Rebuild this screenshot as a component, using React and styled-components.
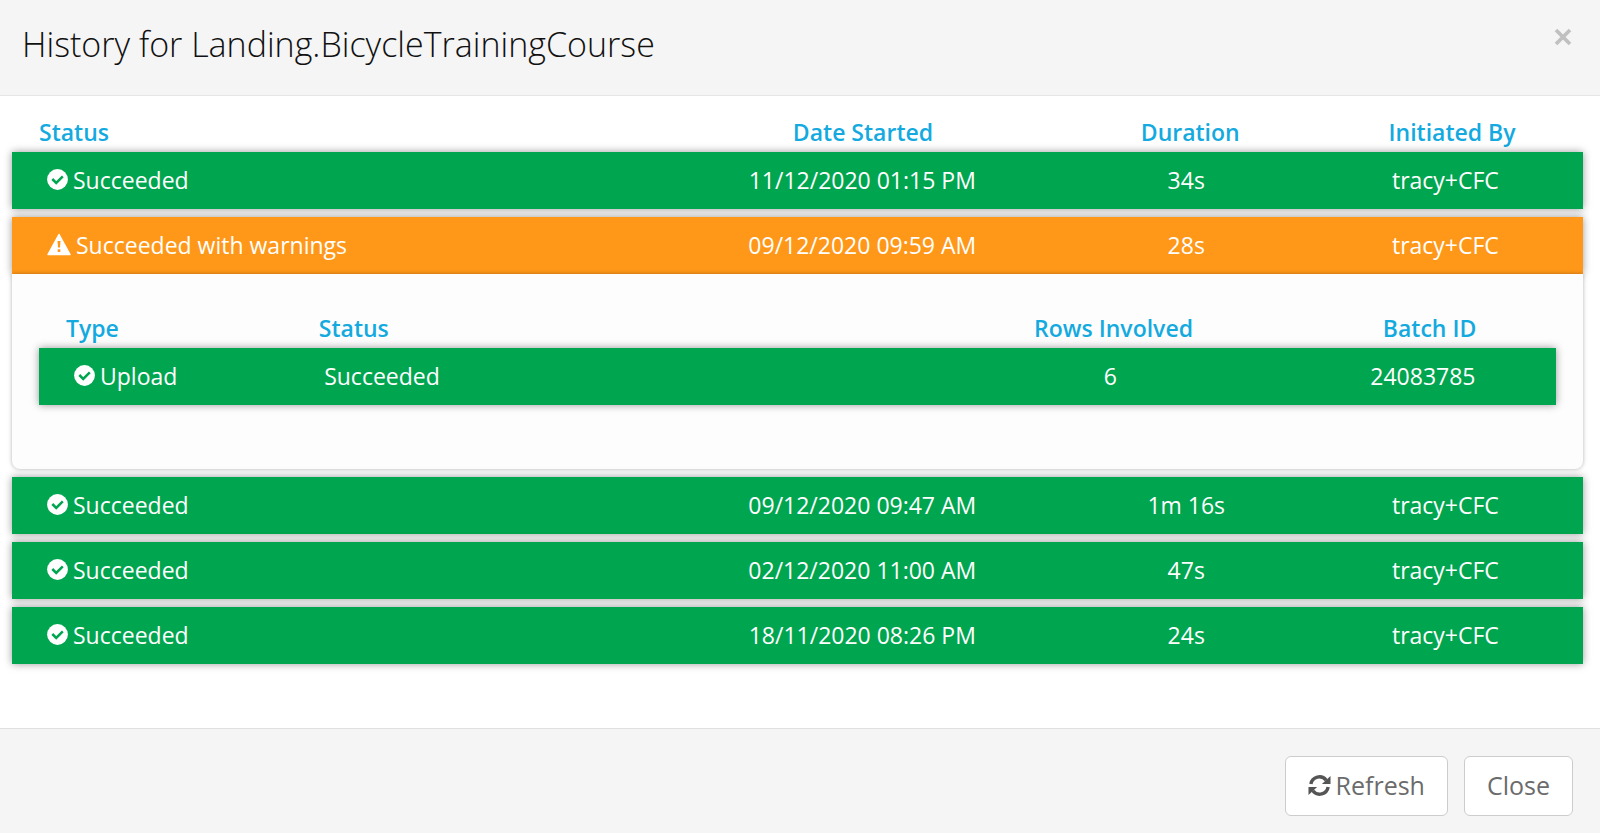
import React from 'react';
import styled, { createGlobalStyle } from 'styled-components'

const GlobalStyle = createGlobalStyle`
  * {
    box-sizing: border-box;
  }

  body {
    margin: 0;
    background: #f5f5f5;
    color: #333;
    font-family: "Open Sans", sans-serif;
    font-size: 23px;
    line-height: 32px;
  }
`;

const Modal = styled.div`
  background: #fff;
`;

const ModalHeader = styled.header`
  display: flex;
  align-items: flex-start;
  justify-content: space-between;
  padding: 20px 28px 27px 22px;
  background: #f5f5f5;
  border-bottom: 1px solid #e5e5e5;
`;

const Title = styled.h1`
  margin: 0;
  color: #111;
  font-size: 34px;
  font-weight: 300;
  line-height: 48px;
`;

const Dismiss = styled.button`
  display: flex;
  margin: 0;
  padding: 8px 0 0;
  border: 0;
  background: none;
  color: #c0c0c0;
  cursor: pointer;
`;

const ModalBody = styled.main`
  padding: 16px 17px 64px 12px;
`;

// rows are laid out as grids, so that each one can carry its own shadow and padding
const Table = styled.table`
  display: block;
`;

const TableHead = styled.thead`
  display: block;
`;

const TableBody = styled.tbody`
  display: flex;
  flex-direction: column;
  gap: 8px;
`;

const Row = styled.tr`
  display: grid;
  grid-template-columns: ${props => props.$columns};
  align-items: center;
`;

const HeadRow = styled(Row)`
  height: 40px;
`;

const statusColors = {
  success: '#00a64f',
  warning: '#ff9818'
};

const StatusRow = styled(Row)`
  height: 57px;
  padding: 0 8px 2px;
  background: ${props => statusColors[props.$status]};
  color: #fff;
  box-shadow: 0 0 8px rgba(0, 0, 0, 0.4);
`;

const HeadCell = styled.th`
  padding: 0 0 0 ${props => props.$left ? '27px' : '0'};
  color: #14aadf;
  font-weight: 600;
  text-align: ${props => props.$left ? 'left' : 'center'};
`;

const Cell = styled.td`
  display: flex;
  align-items: center;
  justify-content: ${props => props.$left ? 'flex-start' : 'center'};
  gap: 5px;
  padding: 0 0 0 ${props => props.$left ? '27px' : '0'};
`;

const DetailRow = styled.tr`
  display: block;
  margin-top: -8px;
`;

const DetailCell = styled.td`
  display: block;
  padding: 34px 27px 64px;
  background: #fdfdfd;
  border-radius: 0 0 8px 8px;
  box-shadow: 0 0 4px rgba(0, 0, 0, 0.3);
`;

const ModalFooter = styled.footer`
  display: flex;
  justify-content: flex-end;
  gap: 16px;
  padding: 27px 27px 17px;
  background: #f5f5f5;
  border-top: 1px solid #e0e0e0;
`;

const Button = styled.button`
  display: flex;
  align-items: center;
  gap: 5px;
  height: 60px;
  padding: 0 22px 2px;
  border: 1px solid #ccc;
  border-radius: 6px;
  background: #fff;
  color: #6b6b6b;
  font-family: inherit;
  font-size: 25px;
  cursor: pointer;
`;

const RefreshIcon = () => (
  <svg width="23" height="23" viewBox="0 0 24 24" fill="#555" aria-hidden="true">
    <path d="M3 10.500A9 9 0 0 1 19 6.500M21 13.500A9 9 0 0 1 5 17.500" fill="none" stroke="#555" strokeWidth="3.600" />
    <path d="M23.500 2V10.500H14.500ZM0.500 22V13.500H9.500Z" />
  </svg>
);

const CrossIcon = () => (
  <svg width="18" height="18" viewBox="0 0 18 18" stroke="currentColor" strokeWidth="3.800" aria-hidden="true">
    <path d="M2 2l14 14M16 2L2 16" />
  </svg>
);

const CheckIcon = () => (
  <svg width="21" height="21" viewBox="0 0 21 21" aria-hidden="true">
    <circle cx="10.500" cy="10.500" r="10.400" fill="#fff" />
    <path d="M5.300 10l3.900 3.900l6.600 -6.600" fill="none" stroke="#00a64f" strokeWidth="2.500" />
  </svg>
);

const WarningIcon = () => (
  <svg width="24" height="23" viewBox="0 0 24 23" aria-hidden="true">
    <path d="M12 1.500L23 21.500H1Z" fill="#fff" stroke="#fff" strokeWidth="1.500" strokeLinejoin="round" />
    <path d="M10.500 8h3l-0.500 6.500h-2zM10.700 16.300h2.600v2.700h-2.600z" fill="#ff9818" />
  </svg>
);

const StatusIcon = ({ status }) => (
  status === 'warning' ? <WarningIcon /> : <CheckIcon />
);

const historyColumns = '5fr 3fr 2fr 2fr';
const batchColumns = '2fr 5fr 3fr 2fr';

const history = [
  { status: 'success', label: 'Succeeded', date: '11/12/2020 01:15 PM', duration: '34s', user: 'tracy+CFC' },
  {
    status: 'warning',
    label: 'Succeeded with warnings',
    date: '09/12/2020 09:59 AM',
    duration: '28s',
    user: 'tracy+CFC',
    batches: [
      { status: 'success', type: 'Upload', label: 'Succeeded', rows: 6, id: 24083785 }
    ]
  },
  { status: 'success', label: 'Succeeded', date: '09/12/2020 09:47 AM', duration: '1m 16s', user: 'tracy+CFC' },
  { status: 'success', label: 'Succeeded', date: '02/12/2020 11:00 AM', duration: '47s', user: 'tracy+CFC' },
  { status: 'success', label: 'Succeeded', date: '18/11/2020 08:26 PM', duration: '24s', user: 'tracy+CFC' }
];

const BatchTable = (props) => (
  <Table>
    <TableHead>
      <HeadRow $columns={batchColumns}>
        <HeadCell $left>Type</HeadCell>
        <HeadCell $left>Status</HeadCell>
        <HeadCell>Rows Involved</HeadCell>
        <HeadCell>Batch ID</HeadCell>
      </HeadRow>
    </TableHead>
    <TableBody>
      {props.batches.map(batch => (
        <StatusRow key={batch.id} $columns={batchColumns} $status={batch.status}>
          <Cell $left><StatusIcon status={batch.status} />{batch.type}</Cell>
          <Cell $left>{batch.label}</Cell>
          <Cell>{batch.rows}</Cell>
          <Cell>{batch.id}</Cell>
        </StatusRow>
      ))}
    </TableBody>
  </Table>
);

const HistoryTable = (props) => (
  <Table>
    <TableHead>
      <HeadRow $columns={historyColumns}>
        <HeadCell $left>Status</HeadCell>
        <HeadCell>Date Started</HeadCell>
        <HeadCell>Duration</HeadCell>
        <HeadCell>Initiated By</HeadCell>
      </HeadRow>
    </TableHead>
    <TableBody>
      {props.entries.map(entry => (
        <React.Fragment key={entry.date}>
          <StatusRow $columns={historyColumns} $status={entry.status}>
            <Cell $left><StatusIcon status={entry.status} />{entry.label}</Cell>
            <Cell>{entry.date}</Cell>
            <Cell>{entry.duration}</Cell>
            <Cell>{entry.user}</Cell>
          </StatusRow>
          {entry.batches &&
            <DetailRow>
              <DetailCell colSpan={4}>
                <BatchTable batches={entry.batches} />
              </DetailCell>
            </DetailRow>
          }
        </React.Fragment>
      ))}
    </TableBody>
  </Table>
);

const App = () => (
  <>
    <GlobalStyle />
    <Modal role="dialog" aria-labelledby="history-title">
      <ModalHeader>
        <Title id="history-title">History for Landing.BicycleTrainingCourse</Title>
        <Dismiss type="button" aria-label="Dismiss"><CrossIcon /></Dismiss>
      </ModalHeader>
      <ModalBody>
        <HistoryTable entries={history} />
      </ModalBody>
      <ModalFooter>
        <Button type="button"><RefreshIcon />Refresh</Button>
        <Button type="button">Close</Button>
      </ModalFooter>
    </Modal>
  </>
);

export default App;
